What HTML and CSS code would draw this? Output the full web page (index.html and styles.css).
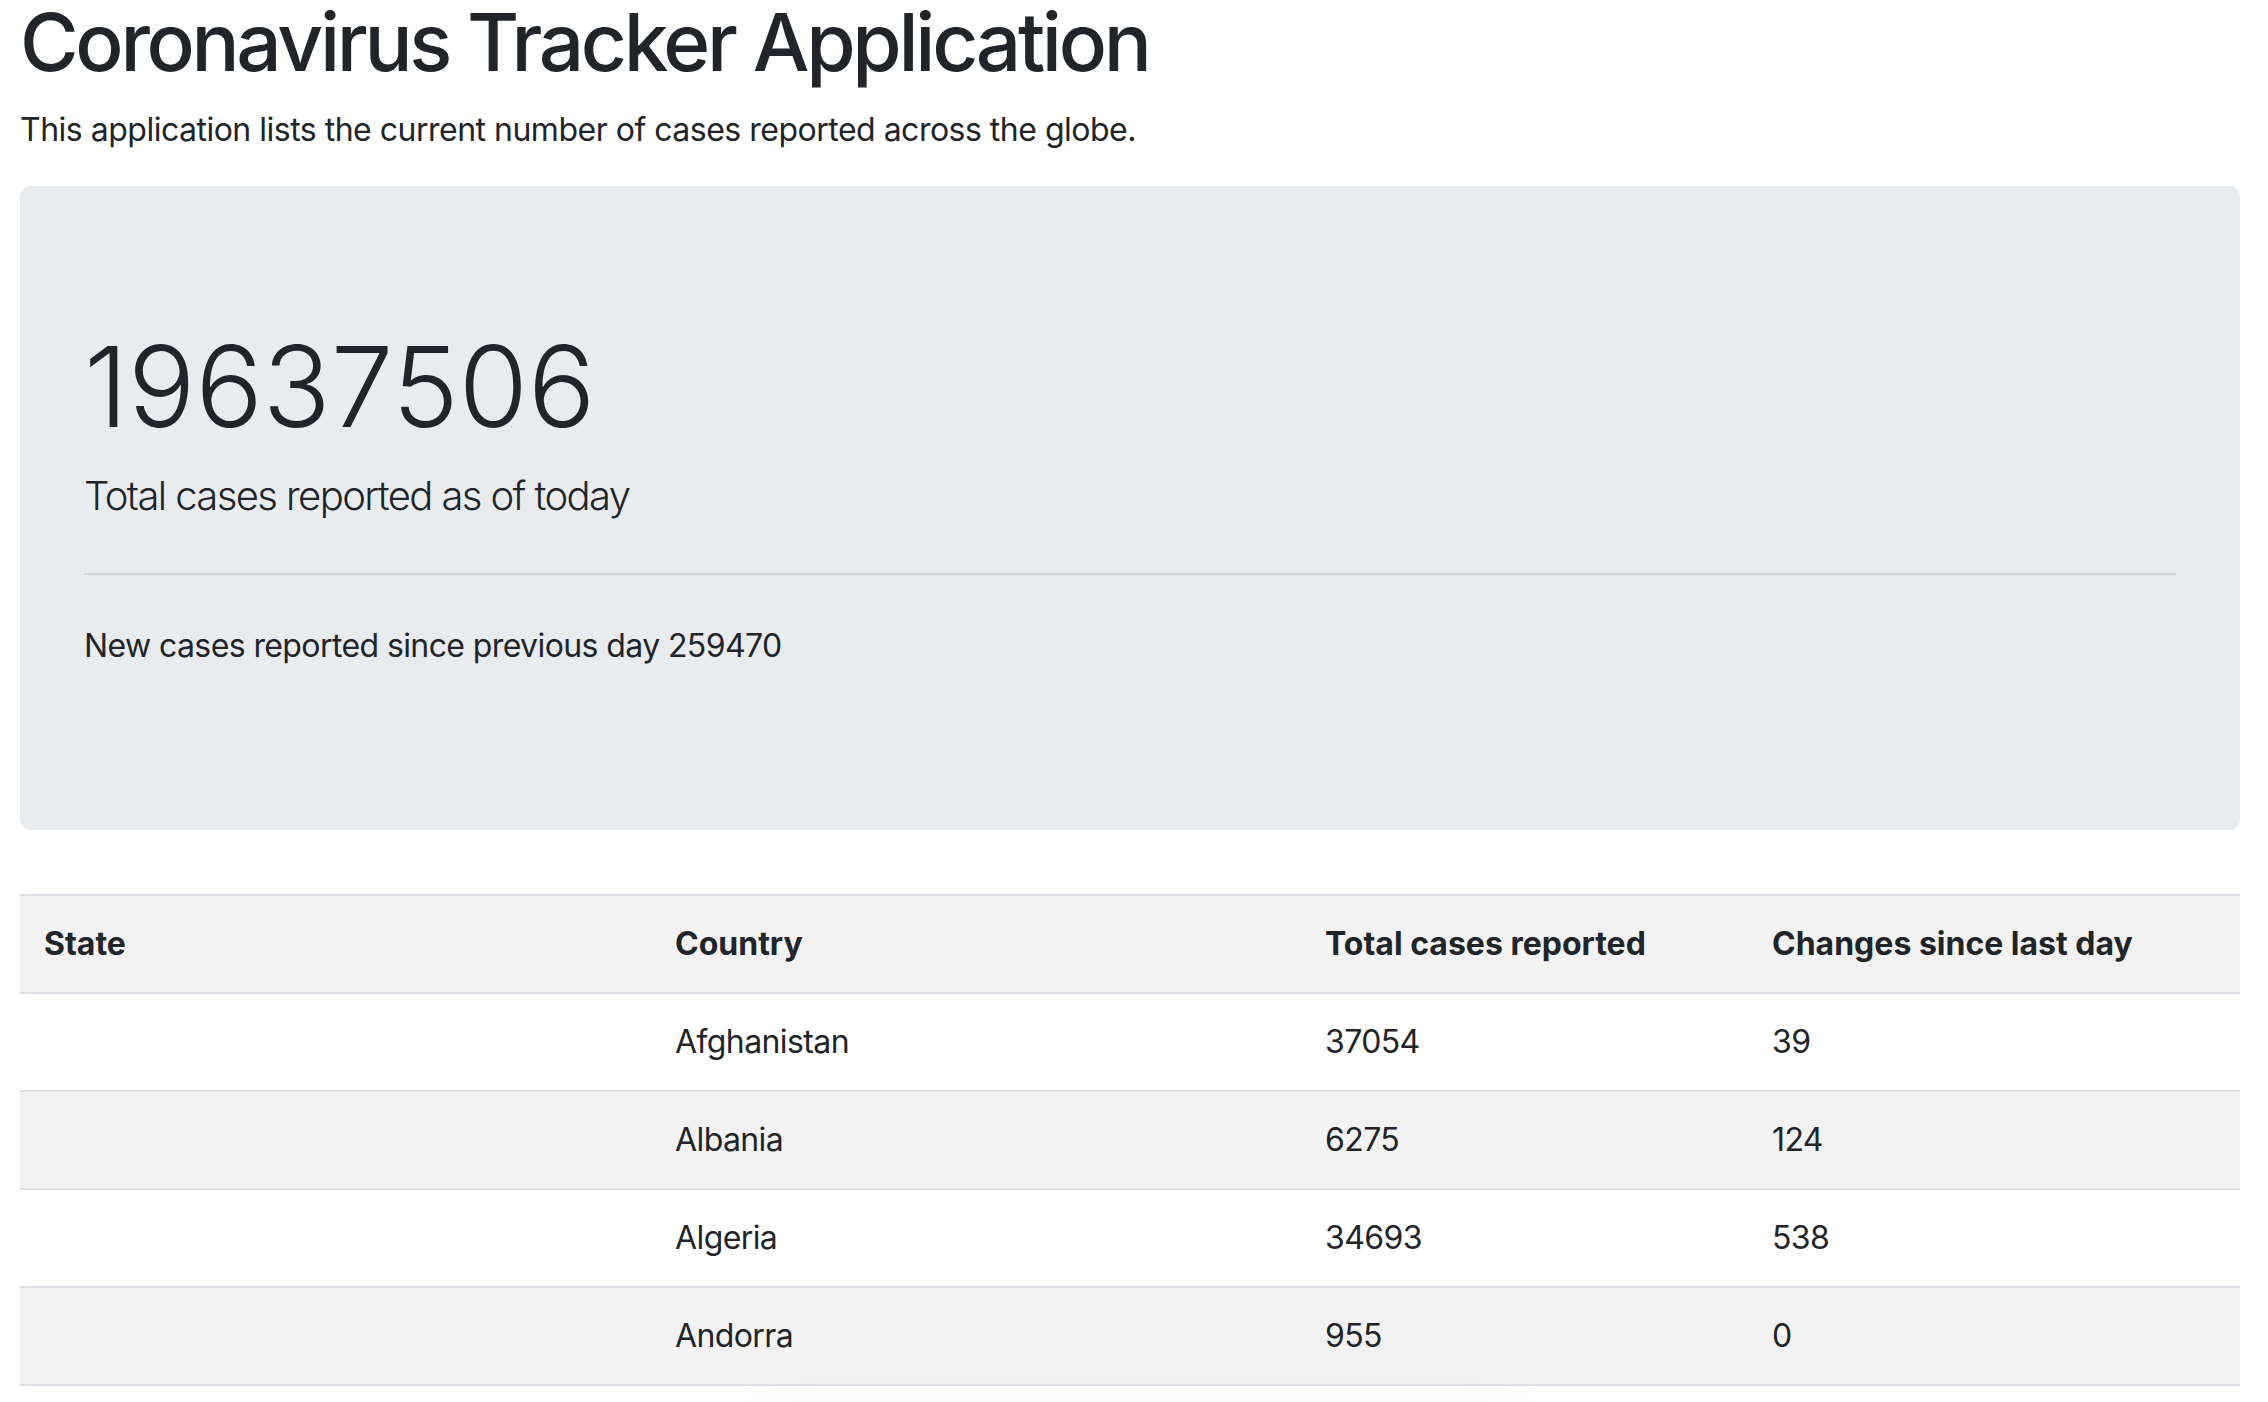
FILE: index.html
```html
<!DOCTYPE html>
<html lang="en">
<head>
<meta charset="utf-8">
<title>Coronavirus Tracker Application</title>
<link rel="stylesheet" href="styles.css">
</head>
<body>
<div class="page">
  <h1 class="title">Coronavirus Tracker Application</h1>
  <p class="intro">This application lists the current number of cases reported across the globe.</p>

  <div class="jumbotron">
    <h2 class="display">19637506</h2>
    <p class="lead">Total cases reported as of today</p>
    <hr class="rule">
    <p class="new-cases">New cases reported since previous day 259470</p>
  </div>

  <table class="stats">
    <colgroup>
      <col class="c-state">
      <col class="c-country">
      <col class="c-total">
      <col class="c-change">
    </colgroup>
    <tbody>
      <tr><th>State</th><th>Country</th><th>Total cases reported</th><th>Changes since last day</th></tr>
      <tr><td></td><td>Afghanistan</td><td>37054</td><td>39</td></tr>
      <tr><td></td><td>Albania</td><td>6275</td><td>124</td></tr>
      <tr><td></td><td>Algeria</td><td>34693</td><td>538</td></tr>
      <tr><td></td><td>Andorra</td><td>955</td><td>0</td></tr>
      <tr><td></td><td>Angola</td><td>1483</td><td>20</td></tr>
    </tbody>
  </table>
</div>
<div class="edge-shadow"></div>
</body>
</html>
```
FILE: styles.css
```css
html, body {
  margin: 0;
  padding: 0;
  background: #fff;
  overflow: hidden;
}
body {
  font-family: Inter, "Liberation Sans", Arial, sans-serif;
  font-size: 32px;
  line-height: 1.5;
  color: #212529;
  letter-spacing: -0.6px;
}
.page {
  padding: 0 28px 0 20px;
  margin-top: -6px;
}
.title {
  margin: 0 0 16px;
  font-size: 80px;
  font-weight: 500;
  line-height: 1.2;
  letter-spacing: -3.3px;
}
.intro {
  margin: 0 0 32px;
  letter-spacing: -0.5px;
}
.jumbotron {
  background: #e9ecef;
  border-radius: 10px;
  padding: 128px 64px;
  margin-bottom: 64px;
}
.display {
  margin: 5px 0 13px;
  font-size: 112px;
  font-weight: 300;
  line-height: 1.2;
  letter-spacing: 0;
}
.lead {
  margin: 0 0 32px;
  font-size: 40px;
  font-weight: 300;
  letter-spacing: -1.6px;
}
.rule {
  margin: 47px 0 47px;
  border: 0;
  border-top: 2px solid rgba(0, 0, 0, 0.1);
}
.new-cases {
  margin: 0 0 32px;
}
.stats {
  width: 100%;
  border-collapse: collapse;
  table-layout: fixed;
}
.c-state { width: 631px; }
.c-country { width: 650px; }
.c-total { width: 447px; }
.c-change { width: auto; }
.stats th,
.stats td {
  padding: 24px;
  text-align: left;
  vertical-align: top;
  border-top: 2px solid #dee2e6;
  height: 48px;
}
.stats th {
  font-weight: 700;
  letter-spacing: 0;
}
.stats tr:nth-child(odd) {
  background: #f2f2f2;
}
.edge-shadow {
  position: fixed;
  left: 760px;
  width: 760px;
  top: 1420px;
  height: 40px;
  border-radius: 20px;
  box-shadow: 0 0 50px 10px rgba(0, 0, 0, 0.06);
}
```
